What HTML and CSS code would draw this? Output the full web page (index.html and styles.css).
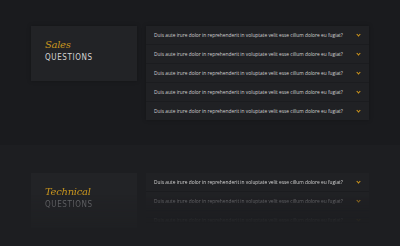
FILE: index.html
```html
<!DOCTYPE html>
<html lang="en">
  <head>
    <meta charset="UTF-8" />
    <title>FAQ</title>
    <link rel="stylesheet" href="styles.css">
  </head>
  <body>
    <section class="faq">
      <div class="faq-title">
        <span class="script">Sales</span>
        <span class="caps">Questions</span>
      </div>
      <ul class="faq-list">
        <li>Duis aute irure dolor in reprehenderit in voluptate velit esse cillum dolore eu fugiat?<span class="chev"></span></li>
        <li>Duis aute irure dolor in reprehenderit in voluptate velit esse cillum dolore eu fugiat?<span class="chev"></span></li>
        <li>Duis aute irure dolor in reprehenderit in voluptate velit esse cillum dolore eu fugiat?<span class="chev"></span></li>
        <li>Duis aute irure dolor in reprehenderit in voluptate velit esse cillum dolore eu fugiat?<span class="chev"></span></li>
        <li>Duis aute irure dolor in reprehenderit in voluptate velit esse cillum dolore eu fugiat?<span class="chev"></span></li>
      </ul>
    </section>

    <!-- second block fades out toward the bottom -->
    <section class="faq faq-alt">
      <div class="faq-title">
        <span class="script">Technical</span>
        <span class="caps">Questions</span>
      </div>
      <ul class="faq-list">
        <li>Duis aute irure dolor in reprehenderit in voluptate velit esse cillum dolore eu fugiat?<span class="chev"></span></li>
        <li>Duis aute irure dolor in reprehenderit in voluptate velit esse cillum dolore eu fugiat?<span class="chev"></span></li>
        <li>Duis aute irure dolor in reprehenderit in voluptate velit esse cillum dolore eu fugiat?<span class="chev"></span></li>
      </ul>
    </section>
  </body>
</html>
```

FILE: styles.css
```css
* {
  padding: 0;
  margin: 0;
  box-sizing: border-box;
}
body {
  background: #1a1b1e;
  font-family: "Open Sans", sans-serif;
  height: 246px;
  overflow: hidden;
}
.faq {
  display: flex;
  align-items: flex-start;
  gap: 9px;
  height: 145px;
  padding: 26px 0 0 31px;
}
.faq-alt {
  background: #1d1e21;
  padding-top: 28px;
  height: 101px;
}
.faq-alt .faq-list {
  -webkit-mask-image: linear-gradient(to bottom, #000 0, #000 22px, rgba(0, 0, 0, 0.35) 32px, rgba(0, 0, 0, 0) 50px);
  mask-image: linear-gradient(to bottom, #000 0, #000 22px, rgba(0, 0, 0, 0.35) 32px, rgba(0, 0, 0, 0) 50px);
}
.faq-alt .faq-title {
  -webkit-mask-image: linear-gradient(to bottom, #000 0, #000 20px, rgba(0, 0, 0, 0.55) 40px, rgba(0, 0, 0, 0) 80px);
  mask-image: linear-gradient(to bottom, #000 0, #000 20px, rgba(0, 0, 0, 0.55) 40px, rgba(0, 0, 0, 0) 80px);
}
.faq-title {
  width: 106px;
  height: 55px;
  background: #222326;
  box-shadow: 0 0 4px rgba(0, 0, 0, 0.25);
  padding: 13px 0 0 14px;
  display: flex;
  flex-direction: column;
}
.script {
  font-family: "DejaVu Serif", serif;
  font-style: italic;
  font-size: 10px;
  line-height: 12px;
  color: #c8951e;
  letter-spacing: -0.3px;
}
.caps {
  font-family: "DejaVu Sans Condensed", "DejaVu Sans", sans-serif;
  text-transform: uppercase;
  font-size: 8px;
  line-height: 14px;
  letter-spacing: 0.6px;
  color: #d4d4d4;
}
.faq-alt .caps {
  color: #707174;
}
.faq-list {
  list-style: none;
  width: 223px;
  background: #202124;
  box-shadow: 0 0 4px rgba(0, 0, 0, 0.25);
}
.faq-list li {
  display: flex;
  align-items: center;
  justify-content: space-between;
  height: 19px;
  padding: 0 9px 0 8px;
  font-size: 4.85px;
  color: #d0d0d0;
  border-bottom: 1px solid #1b1c1f;
}
.faq-list li:last-child {
  border-bottom: none;
  height: 18px;
}
.faq-alt .faq-list li:nth-child(2) {
  color: #8d8e91;
}
.chev {
  width: 3px;
  height: 3px;
  border-right: 1px solid #d59a1c;
  border-bottom: 1px solid #d59a1c;
  transform: rotate(45deg);
  margin-top: -1px;
}
```
